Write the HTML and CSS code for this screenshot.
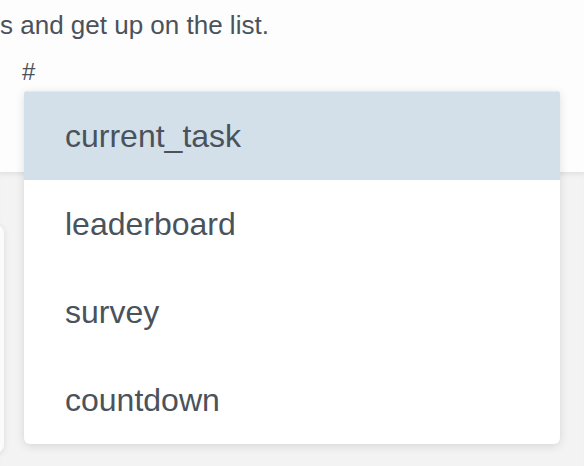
FILE: index.html
```html
<!DOCTYPE html>
<html lang="en">
  <head>
    <meta charset="UTF-8" />
    <title>Channel mention</title>
    <link rel="stylesheet" href="styles.css">
  </head>
  <body>
    <!-- Top part of the page with the composer -->
    <section class="intro">
      <p class="intro-text">s and get up on the list.</p>
      <div class="composer">
        <span class="hash">#</span>

        <!-- Autocomplete list for channels -->
        <ul class="suggestions">
          <li class="suggestion active">current_task</li>
          <li class="suggestion">leaderboard</li>
          <li class="suggestion">survey</li>
          <li class="suggestion">countdown</li>
        </ul>
      </div>
    </section>

    <!-- Grey area below with a card -->
    <section class="board">
      <div class="card"></div>
    </section>
  </body>
</html>
```

FILE: styles.css
```css
/* Page basics */
body {
  margin: 0;
  font-family: "Liberation Sans", Arial, sans-serif;
  color: #4a525b;
  background-color: #f3f3f3;
  overflow: hidden;
}

.intro {
  height: 172px;
  background-color: #fdfdfd;
  box-shadow: 0 2px 4px rgba(0, 0, 0, 0.04);
  position: relative;
  z-index: 1;
}

.intro-text {
  margin: 0;
  padding-top: 11px;
  font-size: 26px;
  line-height: 1.15;
}

.composer {
  position: relative; /* anchor for the suggestion list */
  padding-left: 22px;
  margin-top: 19px;
}

.hash {
  font-size: 24px;
  line-height: 1;
}

.suggestions {
  position: absolute;
  top: 31px;
  left: 24px;
  width: 536px;
  margin: 0;
  padding: 0;
  list-style: none;
  background-color: #fff;
  border-top: 1px solid #e6e9ec;
  border-radius: 2px 2px 6px 6px;
  box-shadow: 0 2px 10px rgba(0, 0, 0, 0.12);
  overflow: hidden;
  z-index: 2;
}

.suggestion {
  height: 88px;
  line-height: 88px;
  padding-left: 41px;
  font-size: 32px;
  color: #4a525b;
}

.suggestion.active {
  background-color: #d3e0e9;
}

.board {
  height: 294px;
  padding-top: 53px;
  box-sizing: border-box;
  box-shadow: inset 0 6px 6px -4px rgba(0, 0, 0, 0.05);
}

.card {
  width: 304px;
  height: 228px;
  margin-left: -300px;
  background-color: #fbfbfb;
  border-radius: 8px;
  box-shadow: 0 1px 6px rgba(0, 0, 0, 0.1);
}
```
